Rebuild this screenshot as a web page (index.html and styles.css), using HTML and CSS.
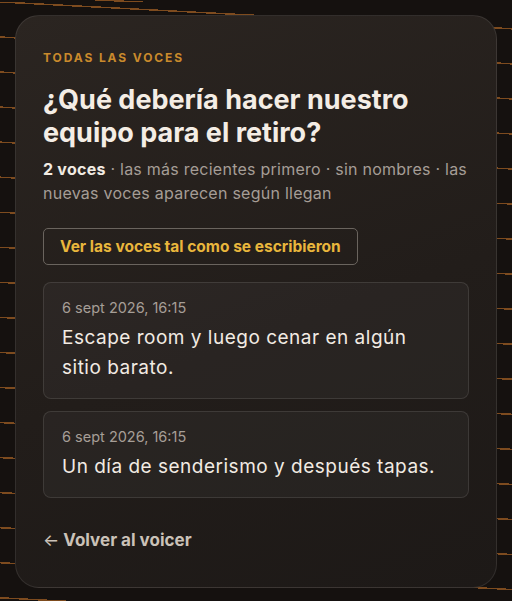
FILE: index.html
```html
<!DOCTYPE html>
<html lang="es">
<head>
    <meta charset="UTF-8">
    <meta name="viewport" content="width=device-width, initial-scale=1.0">
    <title>Todas las voces</title>
    <link rel="stylesheet" href="styles.css">
</head>
<body>
    <main class="panel">
        <p class="eyebrow">Todas las voces</p>
        <h1 class="question">¿Qué debería hacer nuestro equipo para el retiro?</h1>
        <p class="meta"><strong>2 voces</strong> · las más recientes primero · sin nombres · las nuevas voces aparecen según llegan</p>

        <button type="button" class="raw-toggle">Ver las voces tal como se escribieron</button>

        <ul class="voices">
            <li class="voice">
                <time class="voice-date" datetime="2026-09-06T16:15">6 sept 2026, 16:15</time>
                <p class="voice-text">Escape room y luego cenar en algún sitio barato.</p>
            </li>
            <li class="voice">
                <time class="voice-date" datetime="2026-09-06T16:15">6 sept 2026, 16:15</time>
                <p class="voice-text">Un día de senderismo y después tapas.</p>
            </li>
        </ul>

        <a href="#" class="back-link"><span class="back-arrow">←</span> Volver al voicer</a>
    </main>
</body>
</html>
```

FILE: styles.css
```css
html {
    background-color: #15110f;
}
body {
    margin: 0;
    padding: 15px;
    min-height: 100vh;
    box-sizing: border-box;
    font-family: Inter, "Noto Sans", sans-serif;
    color: #f2ebe3;
    background-color: #15110f;
    /* thin warm streaks behind the panel */
    background-image: repeating-linear-gradient(183deg,
        transparent 0 26px,
        rgba(170, 100, 38, 0.7) 26px 27.5px,
        transparent 27.5px 35px);
    background-position: 0 2px;
}
.panel {
    padding: 34px 27px 35px;
    border-radius: 24px;
    border: 1px solid rgba(255, 255, 255, 0.09);
    background: linear-gradient(160deg, #2b2521 0%, #221d1a 55%, #1d1917 100%);
}
.eyebrow {
    margin: 0;
    font-size: 12px;
    line-height: 16px;
    font-weight: 700;
    letter-spacing: 1.9px;
    text-transform: uppercase;
    color: #c98a2c;
}
.question {
    margin: 17px 0 0;
    font-size: 27px;
    line-height: 33px;
    font-weight: 700;
    color: #f4ede5;
}
.meta {
    margin: 8px 0 0;
    font-size: 16px;
    line-height: 24px;
    letter-spacing: 0.25px;
    color: #a59d96;
}
.meta strong {
    color: #f2ebe3;
    font-weight: 700;
}
.raw-toggle {
    margin-top: 23px;
    padding: 8px 16px;
    font-family: inherit;
    font-size: 15.5px;
    line-height: 19px;
    font-weight: 700;
    color: #e9b63c;
    background: transparent;
    border: 1px solid #6a645e;
    border-radius: 5px;
    cursor: pointer;
}
.voices {
    list-style: none;
    margin: 17px 0 0;
    padding: 0;
    display: flex;
    flex-direction: column;
    gap: 12px;
}
.voice {
    padding: 15px 18px 15px;
    border-radius: 8px;
    border: 1px solid rgba(255, 255, 255, 0.1);
    background-color: rgba(255, 255, 255, 0.035);
}
.voice-date {
    display: block;
    font-size: 14.5px;
    line-height: 20px;
    color: #a69e97;
}
.voice-text {
    margin: 5px 0 0;
    font-size: 19px;
    line-height: 30px;
    letter-spacing: 0.5px;
    color: #f2ebe3;
}
.back-link {
    display: inline-block;
    margin-top: 30px;
    font-size: 17px;
    line-height: 24px;
    font-weight: 700;
    color: #cbc2b8;
    text-decoration: none;
}
.back-arrow {
    font-weight: 400;
}
```
